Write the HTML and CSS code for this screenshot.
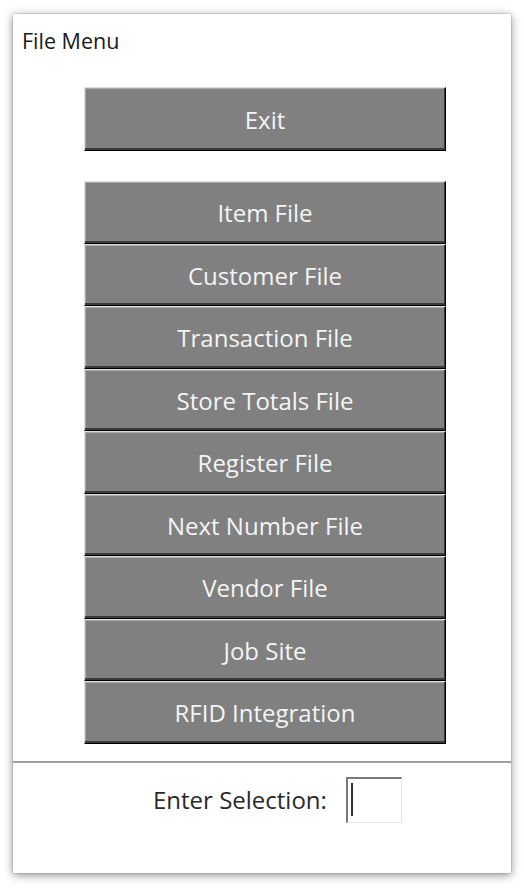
FILE: index.html
```html
<!DOCTYPE html>
<html>
<head>
<meta charset="utf-8">
<link rel="stylesheet" href="styles.css">
</head>
<body>
<div class="window">
  <div class="title">File Menu</div>
  <div class="exit-row"><div class="btn exit">Exit</div></div>
  <div class="menu">
    <div class="btn item">Item File</div>
    <div class="btn item">Customer File</div>
    <div class="btn item">Transaction File</div>
    <div class="btn item">Store Totals File</div>
    <div class="btn item">Register File</div>
    <div class="btn item">Next Number File</div>
    <div class="btn item">Vendor File</div>
    <div class="btn item">Job Site</div>
    <div class="btn item">RFID Integration</div>
  </div>
  <div class="footer">
    <span class="label">Enter Selection:</span>
    <div class="input"><span class="caret"></span></div>
  </div>
</div>
</body>
</html>
```
FILE: styles.css
```css
html, body {
  margin: 0;
  padding: 0;
  background: #ffffff;
}
body {
  padding: 14px 13px;
  font-family: "Open Sans", "Noto Sans", sans-serif;
}
.window {
  width: 498px;
  height: 859px;
  background: #fff;
  box-shadow: 0 0 1px rgba(0,0,0,0.5), 0 2px 9px rgba(0,0,0,0.45);
  display: flex;
  flex-direction: column;
  box-sizing: border-box;
}
.title {
  font-size: 21.5px;
  line-height: 30px;
  color: #1a1a1a;
  padding: 12px 0 0 9px;
  height: 30px;
}
.exit-row {
  padding: 31px 0 0 71px;
}
.btn {
  box-sizing: border-box;
  width: 362px;
  background: #808080;
  color: #f4f4f4;
  font-size: 24px;
  display: flex;
  align-items: center;
  justify-content: center;
  border-style: solid;
  border-width: 1px 1px 1px 1px;
  border-color: #dedede #000 #000 #dedede;
  box-shadow: inset -1px -2px 0 #3a3a3a, inset 1px 1px 0 #a8a8a8;
  padding-top: 1px;
}
.exit {
  height: 64px;
}
.menu {
  padding: 30px 0 0 71px;
  display: flex;
  flex-direction: column;
}
.item {
  height: 62.5px;
}
.footer {
  margin-top: 17px;
  border-top: 2px solid #a0a0a0;
  display: flex;
  align-items: center;
  padding: 14px 0 0 140px;
  gap: 19px;
}
.label {
  font-size: 24px;
  color: #2a2a2a;
}
.input {
  box-sizing: border-box;
  width: 56px;
  height: 46px;
  border-style: solid;
  border-width: 2px 1px 1px 2px;
  border-color: #7a7a7a #e6e6e6 #e6e6e6 #7a7a7a;
  background: #fff;
  padding: 4px 0 0 3px;
}
.caret {
  display: block;
  width: 2px;
  height: 33px;
  background: #333;
}
```
